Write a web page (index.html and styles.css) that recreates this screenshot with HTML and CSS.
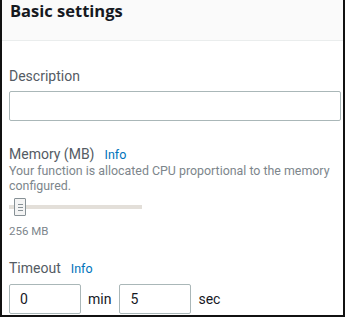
FILE: index.html
```html
<!DOCTYPE html>
<html lang="en">
<head>
    <meta charset="UTF-8">
    <title>Basic settings</title>
    <link rel="stylesheet" href="styles.css">
</head>
<body>
    <div class="panel">
        <div class="panel-header">
            <h2 class="panel-title">Basic settings</h2>
        </div>
        <div class="panel-body">
            <div class="field">
                <label class="label">Description</label>
                <input class="text-input wide" type="text">
            </div>

            <div class="field">
                <div class="label">Memory (MB)<a class="info">Info</a></div>
                <p class="hint">Your function is allocated CPU proportional to the memory configured.</p>
                <div class="slider">
                    <div class="track"></div>
                    <div class="thumb">
                        <span></span><span></span><span></span>
                    </div>
                </div>
                <div class="value">256 MB</div>
            </div>

            <div class="field">
                <div class="label">Timeout<a class="info">Info</a></div>
                <div class="timeout-row">
                    <input class="text-input small" type="text" value="0">
                    <span class="unit">min</span>
                    <input class="text-input small" type="text" value="5">
                    <span class="unit">sec</span>
                </div>
            </div>
        </div>
    </div>
</body>
</html>
```

FILE: styles.css
```css
body {
    margin: 0;
    font-family: Roboto, sans-serif;
    background: white;
    color: #545b64;
}
.panel {
    width: 341px;
    height: 315px;
    border-left: 2px solid #111;
    border-right: 2px solid #111;
    border-bottom: 2px solid #111;
    overflow: hidden;
}
.panel-header {
    background: #fafafa;
    border-bottom: 1px solid #eaeded;
    height: 40px;
}
.panel-title {
    margin: 0;
    padding: 1px 0 0 8px;
    font-family: "Open Sans", sans-serif;
    font-size: 16.5px;
    line-height: 20px;
    font-weight: bold;
    color: #16191f;
}
.panel-body {
    padding: 26px 2px 0 7px;
}
.field {
    margin-bottom: 24px;
}
.field:nth-child(2) {
    margin-bottom: 21px;
}
.label {
    display: block;
    font-size: 14px;
    line-height: 18px;
    color: #545b64;
    margin-bottom: 6px;
}
.info {
    display: inline-block;
    color: #0073bb;
    font-size: 12.5px;
    margin-left: 10px;
}
.hint {
    margin: -7px 0 0;
    font-size: 12.4px;
    line-height: 15px;
    color: #7d868c;
}
.text-input {
    box-sizing: border-box;
    height: 30px;
    border: 1px solid #aab7b8;
    border-radius: 2px;
    font-family: inherit;
    font-size: 14px;
    color: #16191f;
    padding: 0 10px;
    outline: none;
}
.wide {
    width: 332px;
}
.small {
    width: 72px;
}
.slider {
    position: relative;
    width: 133px;
    height: 18px;
    margin-top: 5px;
}
.track {
    position: absolute;
    top: 7px;
    left: 0;
    width: 133px;
    height: 4px;
    background: #e3dfd9;
}
.thumb {
    position: absolute;
    top: 0;
    left: 5px;
    box-sizing: border-box;
    width: 12px;
    height: 18px;
    border: 1px solid #879196;
    border-radius: 1px;
    background: #f4f4f4;
    display: flex;
    flex-direction: column;
    justify-content: center;
    align-items: center;
    gap: 2px;
}
.thumb span {
    width: 5px;
    height: 1px;
    background: #879196;
}
.value {
    font-size: 11.5px;
    line-height: 14px;
    color: #7d868c;
    margin-top: 8px;
}
.timeout-row {
    display: flex;
    align-items: center;
}
.unit {
    font-size: 14px;
    color: #16191f;
    margin: 0 8px 0 7px;
}
```
